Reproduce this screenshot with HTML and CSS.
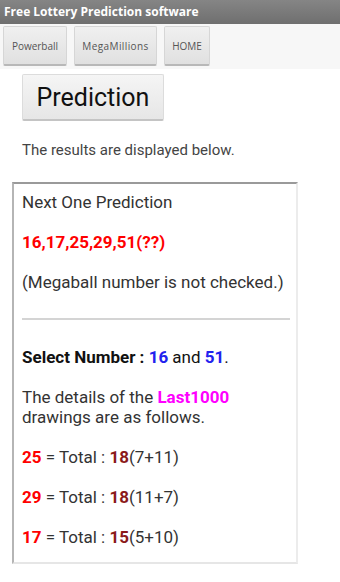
FILE: index.html
```html
<!DOCTYPE html>
<html>
<head>
<meta charset="utf-8">
<link rel="stylesheet" href="styles.css">
</head>
<body>
<div class="titlebar">Free Lottery Prediction software</div>
<div class="toolbar">
  <button class="tbtn w-power">Powerball</button>
  <button class="tbtn w-mega">MegaMillions</button>
  <button class="tbtn w-home">HOME</button>
</div>
<div class="main">
  <button class="bigbtn">Prediction</button>
  <p class="intro">The results are displayed below.</p>
  <div class="box">
    <p>Next One Prediction</p>
    <p class="red b">16,17,25,29,51(??)</p>
    <p>(Megaball number is not checked.)</p>
    <hr class="sep">
    <p class="dark"><span class="b">Select Number : </span><span class="blue b">16</span> and <span class="blue b">51</span>.</p>
    <p>The details of the <span class="mag b">Last1000</span><br>drawings are as follows.</p>
    <p><span class="red b">25</span> = Total : <span class="dred b">18</span>(7+11)</p>
    <p><span class="red b">29</span> = Total : <span class="dred b">18</span>(11+7)</p>
    <p class="last"><span class="red b">17</span> = Total : <span class="dred b">15</span>(5+10)</p>
  </div>
</div>
</body>
</html>
```
FILE: styles.css
```css
html, body {
  margin: 0;
  padding: 0;
  background: #fff;
  font-family: Roboto, "Noto Sans", sans-serif;
}
.titlebar {
  height: 24px;
  background: linear-gradient(#858585, #6f6f6f);
  color: #fff;
  font-family: "Open Sans", Roboto, sans-serif;
  font-weight: bold;
  font-size: 12px;
  line-height: 24px;
  padding-left: 4px;
}
.toolbar {
  background: #f7f7f7;
  display: flex;
  gap: 7px;
  padding: 2px 3px 3px;
  height: 40px;
}
.tbtn {
  font-family: "Open Sans", Roboto, sans-serif;
  font-size: 10px;
  color: #555;
  background: linear-gradient(#f0f0f0, #e0e0e0);
  border: 1px solid #d6d6d6;
  border-bottom: 2px solid #b8b8b8;
  border-radius: 2px;
  padding: 0;
  height: 40px;
  text-align: center;
}
.w-power { width: 64px; }
.w-mega { width: 83px; letter-spacing: 0.4px; }
.w-home { width: 46px; }
.main {
  padding: 5px 12px 0 12px;
}
.bigbtn {
  margin-left: 10px;
  height: 47px;
  width: 142px;
  font-family: Roboto, sans-serif;
  font-size: 25px;
  color: #111;
  background: linear-gradient(#f5f5f5, #e6e6e6);
  border: 1px solid #dcdcdc;
  border-bottom: 2px solid #c4c4c4;
  border-radius: 2px;
  padding: 0;
}
.intro {
  margin: 20px 0 0 10px;
  font-size: 15px;
  color: #444;
  line-height: 18px;
}
.box {
  margin-top: 23px;
  width: 286px;
  box-sizing: border-box;
  border-top: 2px solid #9a9a9a;
  border-left: 2px solid #b5b5b5;
  border-right: 2px solid #ececec;
  border-bottom: 2px solid #e6e6e6;
  padding: 8px 6px 15px 8px;
  color: #333;
  font-size: 17px;
}
.box p {
  margin: 0 0 20px 0;
  line-height: 20px;
  white-space: nowrap;
}
.box p.last { margin-bottom: 0; }
.sep {
  border: none;
  border-top: 2px solid #d4d4d4;
  margin: 26px 0 27px 0;
}
.b { font-weight: bold; }
.dark { color: #111; }
.red { color: #ff0000; }
.dred { color: #8b1a1a; }
.blue { color: #2222ee; }
.mag { color: #ff00ff; }
```
